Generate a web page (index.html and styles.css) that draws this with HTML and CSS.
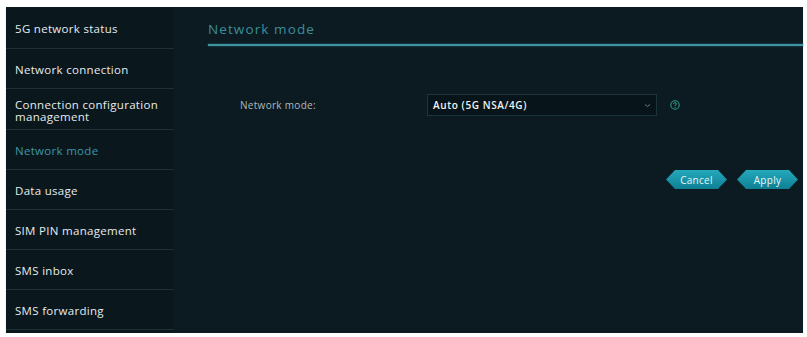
FILE: index.html
```html
<!DOCTYPE html>
<html>
<head>
<meta charset="utf-8">
<link rel="stylesheet" href="styles.css">
</head>
<body>
<div class="frame">
  <nav class="sidebar">
    <div class="item first">5G network status</div>
    <div class="item">Network connection</div>
    <div class="item two">Connection configuration management</div>
    <div class="item active">Network mode</div>
    <div class="item">Data usage</div>
    <div class="item">SIM PIN management</div>
    <div class="item">SMS inbox</div>
    <div class="item">SMS forwarding</div>
  </nav>
  <main class="main">
    <div class="title">Network mode</div>
    <div class="rule"></div>
    <div class="row">
      <div class="label">Network mode:</div>
      <div class="select">
        <span>Auto (5G NSA/4G)</span>
        <svg class="chev" width="7" height="5" viewBox="0 0 7 5"><path d="M1 1.5 L3.5 3.5 L6 1.5" fill="none" stroke="#6d7e84" stroke-width="1"/></svg>
      </div>
      <svg class="help" width="10" height="10" viewBox="0 0 10 10"><circle cx="5" cy="5" r="4.2" fill="none" stroke="#2a9a8c" stroke-width="1.1"/><path d="M3.6 4 Q3.6 2.7 5 2.7 Q6.4 2.7 6.4 3.9 Q6.4 4.7 5 5.2 L5 6" fill="none" stroke="#2a9a8c" stroke-width="1"/><circle cx="5" cy="7.4" r="0.6" fill="#2a9a8c"/></svg>
    </div>
    <div class="actions">
      <div class="btn">Cancel</div>
      <div class="btn">Apply</div>
    </div>
  </main>
</div>
</body>
</html>
```

FILE: styles.css
```css
html, body {
  margin: 0;
  padding: 0;
  background: #ffffff;
}
body {
  font-family: "Open Sans", "Noto Sans", "Liberation Sans", sans-serif;
}
.frame {
  margin: 7px 4px 0 6px;
  width: 797px;
  height: 326px;
  display: flex;
  background: #0c1b21;
  box-shadow: 0 1px 1px #c9d0d2;
}
.sidebar {
  width: 168px;
  flex: none;
  background: #0a171d;
  display: flex;
  flex-direction: column;
}
.item {
  height: 36px;
  padding-top: 3px;
  border-bottom: 1px solid #1f2f35;
  display: flex;
  align-items: center;
  padding-left: 9px;
  color: #e6ebed;
  font-size: 11.5px;
  line-height: 12px;
  letter-spacing: 0.3px;
  box-sizing: content-box;
}
.item.first {
  height: 38px;
}
.item.two {
  height: 37px;
  padding-top: 3px;
}
.item.active {
  color: #3b97a8;
}
.main {
  flex: 1;
  display: flex;
  flex-direction: column;
  padding-left: 34px;
}
.title {
  color: #3d8d99;
  font-size: 13.5px;
  height: 20px;
  margin-top: 13px;
  letter-spacing: 1.1px;
}
.rule {
  height: 2px;
  background: #3f93a0;
  margin-top: 4px;
  box-shadow: 0 0 2px #2b6f7a;
}
.row {
  display: flex;
  align-items: center;
  margin-top: 48px;
  padding-left: 32px;
  height: 22px;
}
.label {
  width: 187px;
  color: #aeb8bc;
  font-size: 10px;
  letter-spacing: 0.3px;
}
.select {
  width: 230px;
  height: 22px;
  box-sizing: border-box;
  border: 1px solid #1b3339;
  background: #07151a;
  display: flex;
  align-items: center;
  justify-content: space-between;
  padding: 0 5px 0 5px;
  color: #f0f3f4;
  font-size: 10px;
  font-weight: 600;
  letter-spacing: 0.6px;
}
.chev {
  display: block;
}
.help {
  margin-left: 13px;
  display: block;
}
.actions {
  display: flex;
  justify-content: flex-end;
  gap: 10px;
  margin-top: 54px;
  padding-right: 5px;
}
.btn {
  width: 61px;
  height: 19px;
  display: flex;
  align-items: center;
  justify-content: center;
  color: #eaf6f8;
  font-size: 10px;
  letter-spacing: 0.3px;
  background: linear-gradient(#25a9bd, #0d7f93);
  clip-path: polygon(9px 0, calc(100% - 9px) 0, 100% 50%, calc(100% - 9px) 100%, 9px 100%, 0 50%);
}
```
